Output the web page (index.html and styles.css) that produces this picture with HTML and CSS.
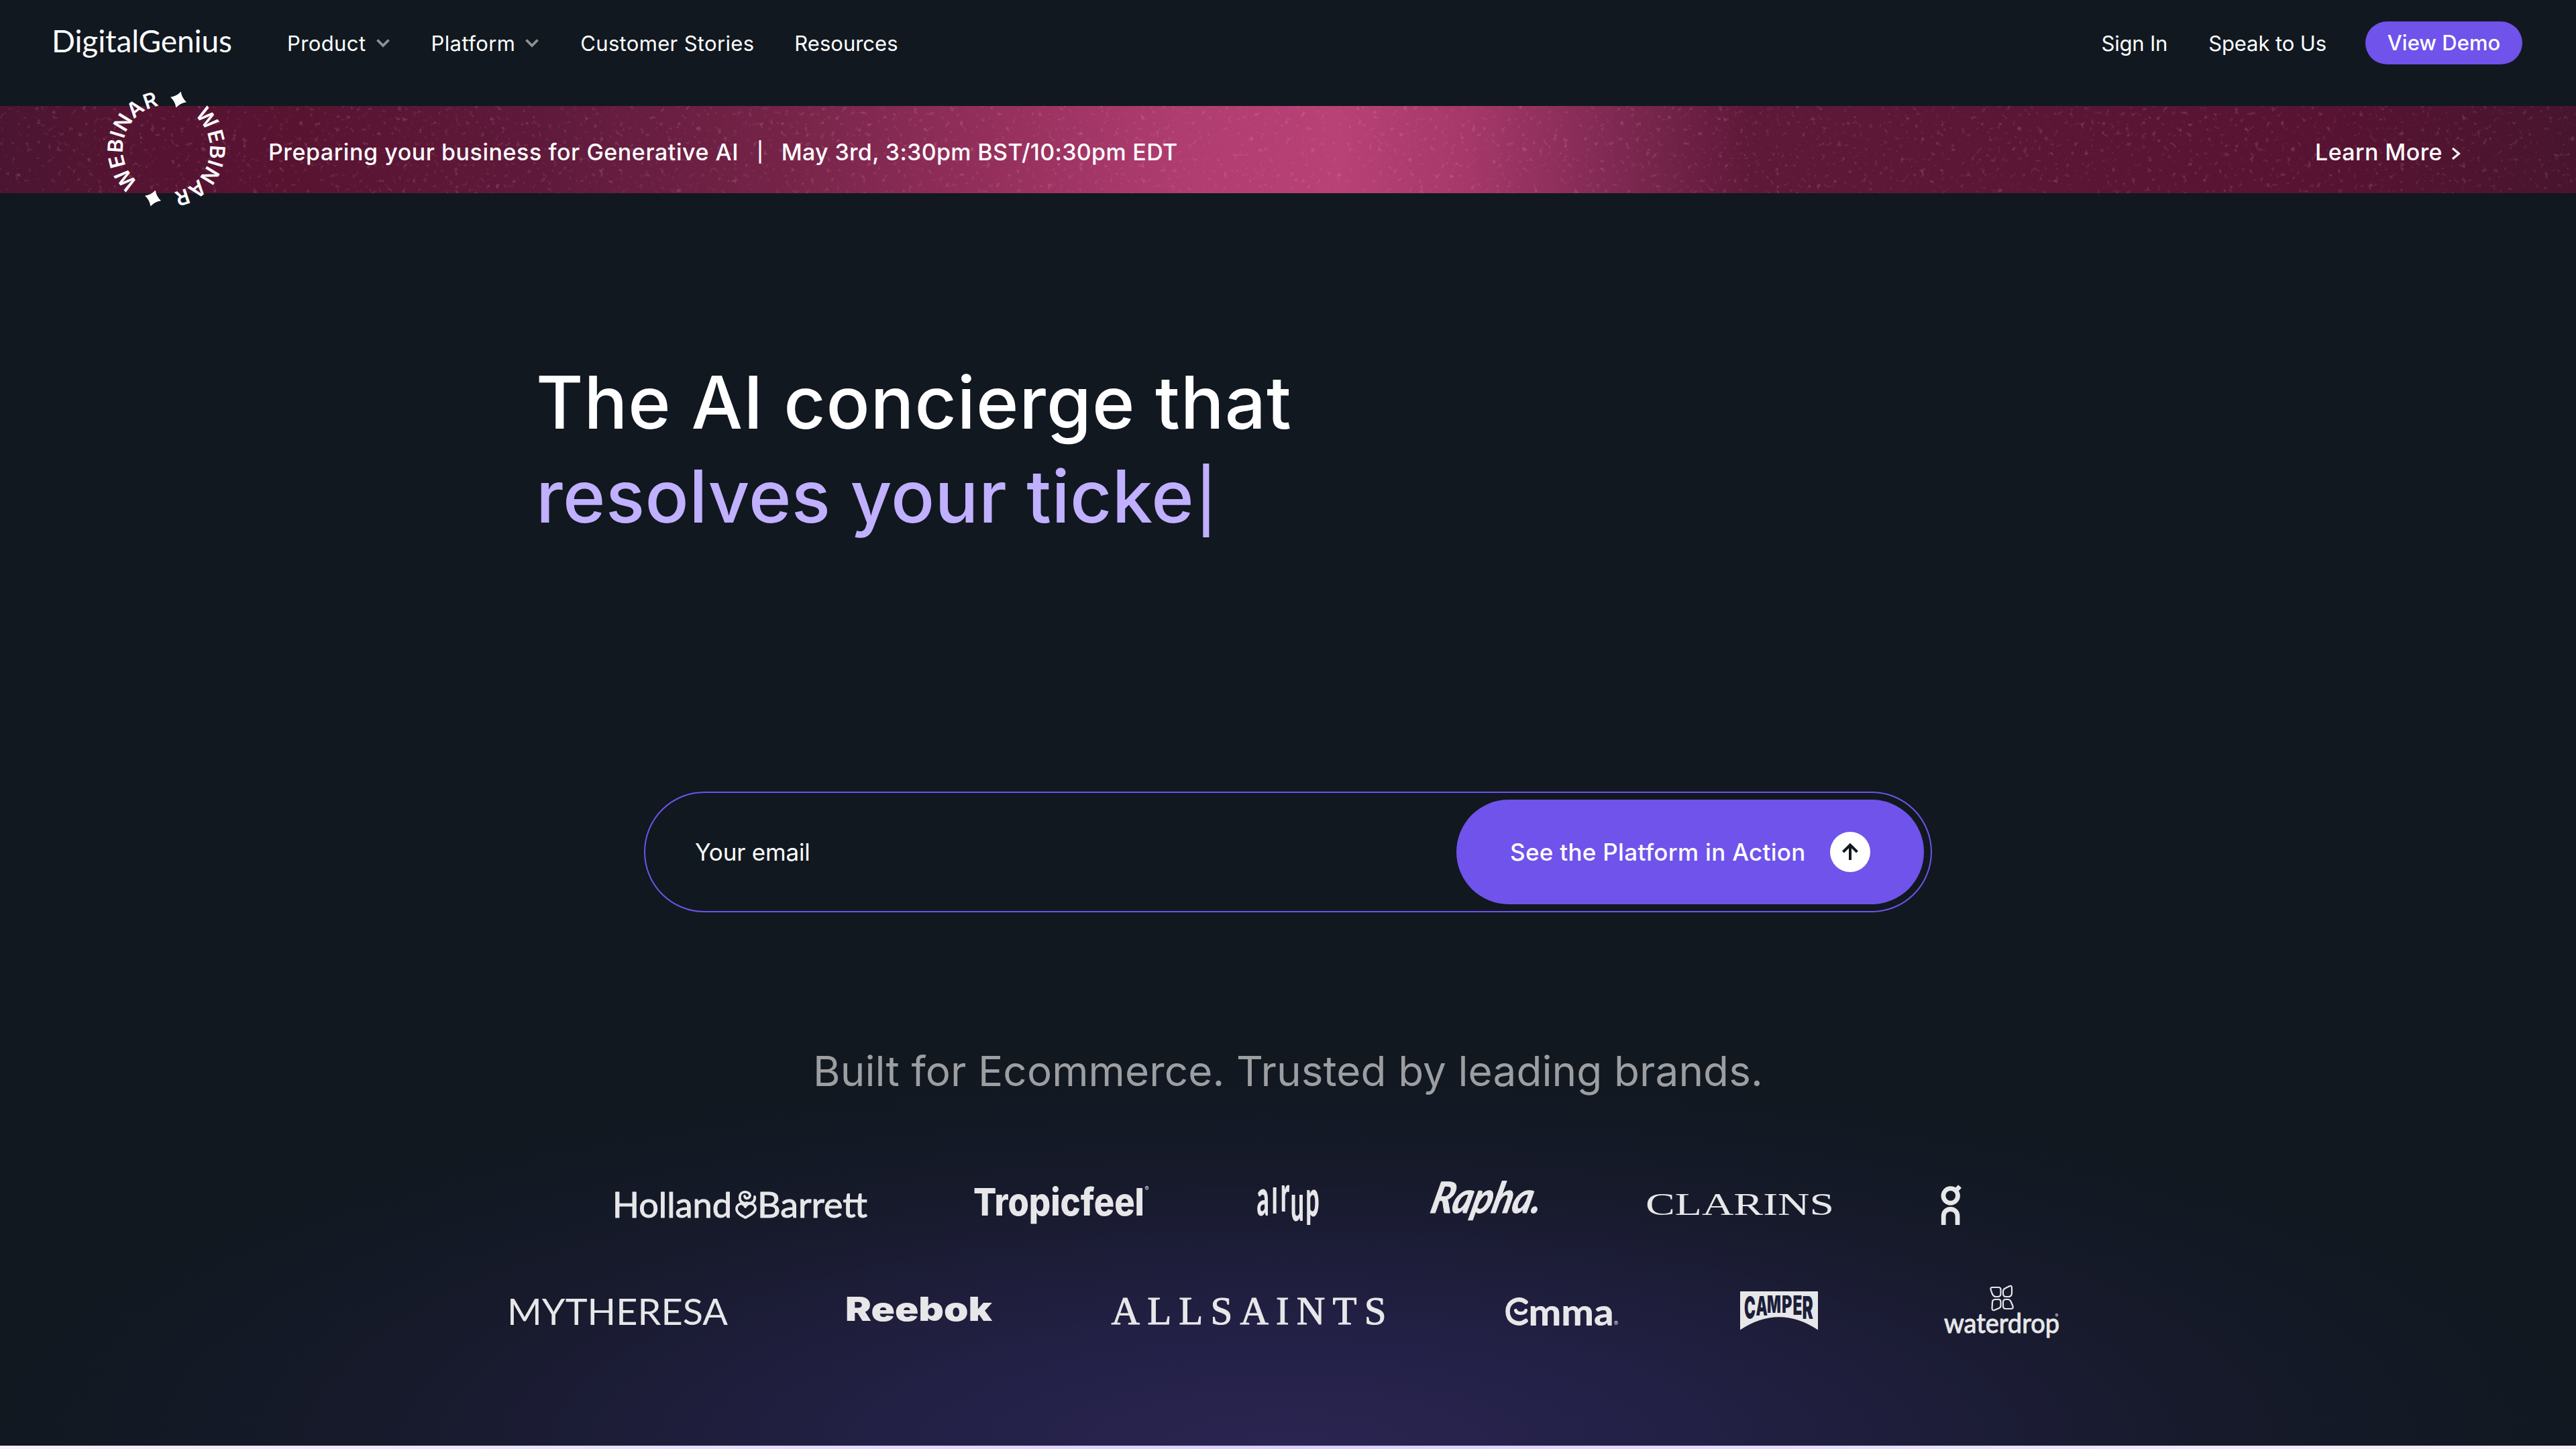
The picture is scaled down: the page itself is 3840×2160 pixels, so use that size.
FILE: index.html
```html
<!DOCTYPE html>
<html lang="en">
<head>
<meta charset="utf-8">
<title>DigitalGenius</title>
<link rel="stylesheet" href="styles.css">
</head>
<body>
<header class="nav">
  <a class="brand">DigitalGenius</a>
  <nav class="links">
    <a class="link drop-down">Product <svg class="chev" viewBox="0 0 22 14"><path d="M2.500 2.500l8.500 8.500 8.500-8.500"/></svg></a>
    <a class="link drop-down">Platform <svg class="chev" viewBox="0 0 22 14"><path d="M2.500 2.500l8.500 8.500 8.500-8.500"/></svg></a>
    <a class="link wide">Customer Stories</a>
    <a class="link">Resources</a>
  </nav>
  <div class="actions">
    <a class="link sign">Sign In</a>
    <a class="link">Speak to Us</a>
    <a class="demo">View Demo</a>
  </div>
</header>

<section class="banner">
  <svg class="grain" width="3840" height="130">
    <filter id="grain" x="0" y="0" width="100%" height="100%">
      <feTurbulence type="fractalNoise" baseFrequency="0.13" numOctaves="3" seed="7"/>
      <feColorMatrix values="0 0 0 0 .82  0 0 0 0 .5  0 0 0 0 .65  5 0 0 0 -3.15"/>
    </filter>
    <rect width="3840" height="130" filter="url(#grain)"/>
  </svg>
  <svg class="ring" viewBox="-100 -100 200 200">
    <defs><path id="arc" d="M40.9 -50.5A65 65 0 0 1 10.2 64.2"/></defs>
    <g>
      <text textLength="149"><textPath href="#arc" textLength="149">WEBINAR</textPath></text>
      <path transform="translate(18 -73.5) rotate(17)" d="M0 -12.500Q4 -4 12.500 0Q4 4 0 12.500Q-4 4 -12.500 0Q-4 -4 0 -12.500Z"/>
    </g>
    <g transform="rotate(180)">
      <text textLength="149"><textPath href="#arc" textLength="149">WEBINAR</textPath></text>
      <path transform="translate(20 -73.5) rotate(17)" d="M0 -12.500Q4 -4 12.500 0Q4 4 0 12.500Q-4 4 -12.500 0Q-4 -4 0 -12.500Z"/>
    </g>
  </svg>
  <p class="event"><span>Preparing your business for Generative AI</span><span class="bar">|</span><span class="date">May 3rd, 3:30pm BST/10:30pm EDT</span></p>
  <a class="more">Learn More <svg viewBox="0 0 14 18"><path d="M2 1l9.500 8-9.500 8"/></svg></a>
</section>

<main class="hero">
  <h1 class="title">The AI concierge that<br><span class="typed">resolves your ticke<span class="caret">|</span></span></h1>

  <form class="signup">
    <label class="field">Your email</label>
    <button class="submit" type="button"><span>See the Platform in Action</span>
      <svg class="up" viewBox="0 0 60 60"><circle cx="30" cy="30" r="30"/><path d="M30 42V20M19.500 30L30 19.500 40.500 30"/></svg>
    </button>
  </form>

  <h2 class="trust">Built for Ecommerce. Trusted by leading brands.</h2>

  <div class="logos first">
    <svg width="376" height="90" viewBox="916 1750 376 90">
      <g class="lato w4 bolder"><text x="913" y="1815" font-size="53" textLength="178" lengthAdjust="spacingAndGlyphs">Holland</text><text x="1129" y="1815" font-size="53" textLength="164" lengthAdjust="spacingAndGlyphs">Barrett</text></g>
      <path class="line" stroke-width="3.800" d="M1111 1799C1106 1790 1098 1796 1098 1802C1098 1809 1106 1812 1111 1815C1117 1812 1126 1808 1126 1801C1126 1795 1116 1790 1111 1799M1113 1793C1121 1795 1126 1791 1125 1784M1112 1794C1105 1794 1102 1789 1103 1783C1104 1775 1117 1775 1118 1782C1118 1787 1110 1788 1110 1783"/>
    </svg>
    <svg width="262" height="90" viewBox="1452 1750 262 90">
      <text class="inter w8" x="1451" y="1812" font-size="57" textLength="255" lengthAdjust="spacingAndGlyphs">Tropicfeel</text>
      <text class="inter" x="1706.500" y="1775" font-size="9">®</text>
    </svg>
    <svg width="94" height="90" viewBox="1874 1750 94 90">
      <text class="lato w9" font-size="76" transform="translate(1873.500 0) scale(.47 1)" x="0 47 75 107 155" y="1812 1809 1806 1820 1813">aırup</text>
    </svg>
    <svg width="166" height="90" viewBox="2128 1750 166 90">
      <text class="lato w7 it bolder" transform="translate(2130 1808) skewX(-14)" font-size="64" textLength="164" lengthAdjust="spacingAndGlyphs">Rapha.</text>
    </svg>
    <svg width="279" height="90" viewBox="2454 1750 279 90">
      <text class="serif" x="2453" y="1811" font-size="46" textLength="281" lengthAdjust="spacingAndGlyphs">CLARINS</text>
    </svg>
    <svg width="31" height="90" viewBox="2893 1750 31 90">
      <path class="line butt" stroke-width="6.800" d="M2918.500 1782.500A10.800 10.800 0 1 1 2896.900 1782.500A10.800 10.800 0 1 1 2918.500 1782.500M2914.500 1776L2921.500 1768.500M2897.200 1826V1813C2897.200 1799 2918 1799 2918 1813V1826"/>
    </svg>
  </div>

  <div class="logos second">
    <svg width="324" height="90" viewBox="760 1910 324 90">
      <text class="lato w4" x="756" y="1974.500" font-size="55" textLength="329" lengthAdjust="spacingAndGlyphs">MYTHERESA</text>
    </svg>
    <svg width="214" height="90" viewBox="1263 1910 214 90">
      <text class="inter w9" x="1260" y="1969" font-size="49" textLength="219" lengthAdjust="spacingAndGlyphs">Reebok</text>
    </svg>
    <svg width="408" height="90" viewBox="1656 1910 408 90">
      <text class="serif bolder" x="1655.500" y="1974" font-size="59" textLength="410">ALLSAINTS</text>
    </svg>
    <svg width="170" height="90" viewBox="2243 1910 170 90">
      <path class="line" stroke-width="6.500" d="M2273.500 1941C2263 1933 2246.500 1939 2246.500 1955C2246.500 1971 2263 1977 2273.500 1969"/>
      <path class="line" stroke-width="5" d="M2258.500 1953.500C2260 1959 2272 1959 2273.500 1953.500"/>
      <text class="lato w9" x="2277.500" y="1975.500" font-size="55" textLength="127" lengthAdjust="spacingAndGlyphs">mma</text>
      <text class="inter" x="2405" y="1975.500" font-size="9">®</text>
    </svg>
    <svg width="116" height="90" viewBox="2593 1910 116 90">
      <path d="M2593 1925H2709V1982.500Q2651 1944 2593 1982.500Z"/>
      <g class="camper">
        <text transform="translate(2599 1966) scale(.54 1.120)">C</text>
        <text transform="translate(2616.500 1960.500) scale(.52 .960)">A</text>
        <text transform="translate(2633 1956.500) scale(.52 .840)">M</text>
        <text transform="translate(2655 1956.500) scale(.56 .840)">P</text>
        <text transform="translate(2671.500 1959.500) scale(.54 .950)">E</text>
        <text transform="translate(2685.500 1966) scale(.58 1.120)">R</text>
      </g>
    </svg>
    <svg width="191" height="110" viewBox="2889 1900 191 110">
      <path class="line" stroke-width="2.200" d="M2970 1923H2979Q2982.500 1923 2982.500 1926.500V1932Q2982.500 1937 2978 1937H2975Q2971.500 1937 2969.500 1932L2967.500 1926Q2967 1923 2970 1923ZM2986 1932V1929Q2986 1926 2989 1924.500L2996 1921Q2999 1920 2999 1924V1931Q2999 1937 2994 1937H2990Q2986 1937 2986 1932ZM2970 1945Q2970 1941 2975 1941H2979Q2982.500 1941 2982.500 1945V1950Q2982.500 1953 2980 1954L2973 1957Q2969.500 1958 2969.500 1954ZM2986 1945Q2986 1941 2990 1941H2993Q2996 1941 2997.500 1944L3000.500 1951Q3001.500 1955 2998 1955H2990Q2986 1955 2986 1951Z" transform="translate(0 -4)"/>
      <text class="lato w4 bolder" x="2898" y="1987" font-size="41" textLength="172" lengthAdjust="spacingAndGlyphs">waterdrop</text>
      <text class="inter" x="3063.500" y="1964" font-size="7">®</text>
    </svg>
  </div>
</main>
<div class="edge"></div>
</body>
</html>
```
FILE: styles.css
```css
* { box-sizing: border-box; margin: 0; padding: 0; }

body {
  width: 3840px;
  height: 2160px;
  overflow: hidden;
  display: flex;
  flex-direction: column;
  background: #111820;
  color: #fff;
  font-family: "Inter", sans-serif;
}

svg { display: block; flex: none; }

/* Top navigation */
.nav {
  height: 158px;
  padding: 0 80px 30px 77px;
  display: flex;
  align-items: center;
  font-size: 31px;
}
.brand {
  width: 351px;
  font-family: "Lato", sans-serif;
  font-size: 46px;
  letter-spacing: -.1px;
  line-height: 60px;
  margin-top: -7px;
  white-space: nowrap;
}
.links { display: flex; gap: 60px; }
.link { display: flex; align-items: center; gap: 14px; white-space: nowrap; }
.drop-down { letter-spacing: .4px; margin-right: 1px; }
.wide { letter-spacing: .33px; }
.chev { width: 22px; height: 14px; fill: none; stroke: #8f9091; stroke-width: 3.8; }
.actions { margin-left: auto; display: flex; align-items: center; }
.actions .link { margin-right: 58px; letter-spacing: -.1px; }
.actions .sign { letter-spacing: -.2px; margin-right: 61px; }
.demo {
  width: 234px;
  height: 64px;
  line-height: 64px;
  border-radius: 32px;
  text-align: center;
  background: #6f53ea;
  font-weight: 500;
}

/* Webinar banner */
.banner {
  position: relative;
  height: 130px;
  padding: 7px 172px 0 400px;
  display: flex;
  align-items: center;
  justify-content: space-between;
  font-size: 34px;
  font-weight: 500;
  background: linear-gradient(90deg, #4b1531 0, #551432 5%, #581331 11%, #5f1a3b 21%, #742347 30%, #96305d 39%, #b03d70 46%, #b84176 52%, #a53868 57%, #7d2850 63%, #5e1838 68%, #581332 90%, #48152e 100%);
}
.grain { position: absolute; inset: 0; opacity: .18; }
.ring { position: absolute; left: 148px; top: -36px; width: 200px; height: 200px; fill: #fff; font: 600 31px "Inter", sans-serif; }
.event, .more { position: relative; display: flex; align-items: center; white-space: nowrap; letter-spacing: .55px; }
.bar { margin: 0 26px 0 27px; font-size: 29px; }
.date { letter-spacing: .32px; }
.more { gap: 13px; letter-spacing: .4px; }
.more svg { width: 14px; height: 18px; margin-top: 5px; fill: none; stroke: #fff; stroke-width: 3.2; }

/* Hero */
.hero {
  height: 1867px;
  padding-top: 242px;
  display: flex;
  flex-direction: column;
  align-items: center;
  background: radial-gradient(1950px 570px at 50% 100%, #2a2551 0, #242148 25%, #1d1d39 50%, #171a2b 70%, #121924 88%, #111820 100%);
}
.title {
  align-self: flex-start;
  margin-left: 799px;
  height: 280px;
  font-size: 108px;
  line-height: 140px;
  font-weight: 500;
  letter-spacing: .95px;
}
.typed { color: #c0b0ff; letter-spacing: .4px; }
.caret { font-size: 92px; line-height: 1; margin-left: 2px; }
.signup {
  margin-top: 370px;
  width: 1920px;
  height: 180px;
  padding: 0 10px 0 74px;
  border: 2px solid #6f53ea;
  border-radius: 90px;
  display: flex;
  align-items: center;
  justify-content: space-between;
  font-size: 35px;
  letter-spacing: -.2px;
}
.submit {
  width: 697px;
  height: 156px;
  padding: 0 80px;
  border: 0;
  border-radius: 78px;
  display: flex;
  align-items: center;
  justify-content: space-between;
  background: #6f53ea;
  color: #fff;
  font: 500 35px "Inter", sans-serif;
  letter-spacing: .3px;
  white-space: nowrap;
}
.up { width: 60px; height: 60px; fill: #fff; }
.up path { fill: none; stroke: #111820; stroke-width: 4; }
.trust {
  margin-top: 197px;
  height: 80px;
  line-height: 80px;
  font-size: 62px;
  font-weight: 400;
  letter-spacing: .1px;
  color: #9c9ea1;
}

/* Brand logos */
.logos { display: flex; align-items: center; fill: #e7e7e9; }
.logos svg { overflow: visible; }
.first { gap: 160px; margin-top: 113px; height: 90px; }
.second { gap: 179.4px; margin-top: 70px; height: 90px; }
.lato { font-family: "Lato", sans-serif; }
.inter { font-family: "Inter", sans-serif; }
.serif { font-family: "Liberation Serif", serif; }
.it { font-style: italic; }
.w4 { font-weight: 400; }
.w7 { font-weight: 700; }
.w8 { font-weight: 800; }
.w9 { font-weight: 900; }
.bolder { stroke: #e7e7e9; stroke-width: 1; stroke-linejoin: round; }
.line { fill: none; stroke: #e7e7e9; stroke-linecap: round; stroke-linejoin: round; }
.butt { stroke-linecap: butt; }
.camper { font: 900 42px "Inter", sans-serif; fill: #1c1e39; }

.edge { height: 5px; background: linear-gradient(90deg, #f4f1ff, #d9cdff 50%, #f4f1ff); }
```
